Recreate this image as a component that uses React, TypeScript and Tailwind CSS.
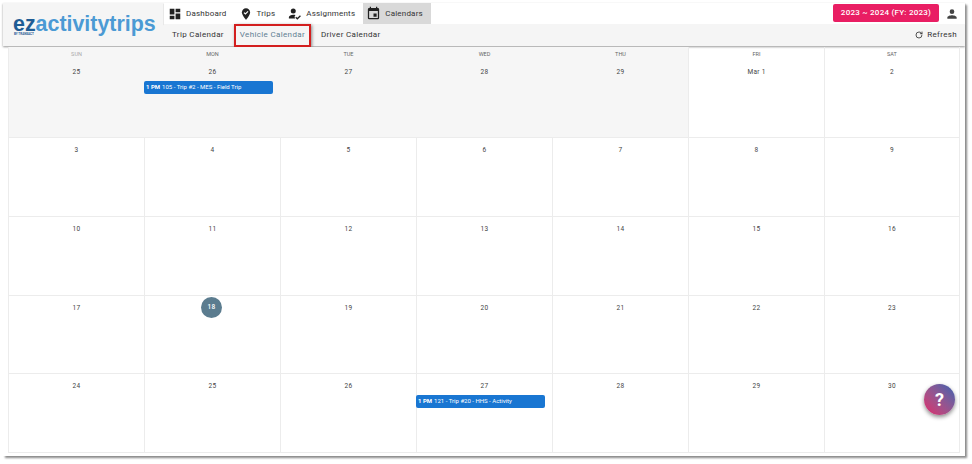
import { RotateCw } from "lucide-react";

const weekdays = ["SUN", "MON", "TUE", "WED", "THU", "FRI", "SAT"];

const weeks = [
  ["25", "26", "27", "28", "29", "Mar 1", "2"],
  ["3", "4", "5", "6", "7", "8", "9"],
  ["10", "11", "12", "13", "14", "15", "16"],
  ["17", "18", "19", "20", "21", "22", "23"],
  ["24", "25", "26", "27", "28", "29", "30"],
];

const rowHeights = ["h-[77px]", "h-[79px]", "h-[79px]", "h-[78px]", "h-[79px]"];

function DashboardIcon() {
  return (
    <svg viewBox="0 0 24 24" className="h-[14px] w-[14px] fill-[#222]">
      <path d="M3 13h8V3H3zm0 8h8v-6H3zm10 0h8V11h-8zm0-18v6h8V3z" />
    </svg>
  );
}

function PinIcon() {
  return (
    <svg viewBox="0 0 24 24" className="h-[14px] w-[14px]">
      <path fill="#222" d="M12 2C8 2 5 5 5 9c0 5 7 13 7 13s7-8 7-13c0-4-3-7-7-7z" />
      <path fill="none" stroke="#fff" strokeWidth="2" d="M8.500 9.500l2.500 2.500 4.500-4.500" />
    </svg>
  );
}

function AssignIcon() {
  return (
    <svg viewBox="0 0 24 24" className="h-[15px] w-[15px] fill-[#222]">
      <circle cx="10" cy="8" r="4" />
      <path d="M10 14c-3.500 0-7 1.700-7 4v2h10l-1-3 1.500-2.600c-1.300-.3-2.500-.4-3.500-.4z" />
      <path fill="none" stroke="#222" strokeWidth="2" d="M14 18l2.500 2.500 5-5" />
    </svg>
  );
}

function CalendarIcon() {
  return (
    <svg viewBox="0 0 24 24" className="h-[15px] w-[15px] fill-[#222]">
      <path d="M17 12h-5v5h5zM16 1v2H8V1H6v2H5a2 2 0 0 0-2 2v14a2 2 0 0 0 2 2h14a2 2 0 0 0 2-2V5a2 2 0 0 0-2-2h-1V1zm3 18H5V8h14z" />
    </svg>
  );
}

function PersonIcon() {
  return (
    <svg viewBox="0 0 24 24" className="h-[14px] w-[14px] fill-[#444]">
      <path d="M12 12a4 4 0 1 0 0-8 4 4 0 0 0 0 8zm0 2c-2.700 0-8 1.300-8 4v2h16v-2c0-2.700-5.300-4-8-4z" />
    </svg>
  );
}

function EventBar({ time, text }: { time: string; text: string }) {
  return (
    <div className="mt-[4px] -ml-[1px] mr-[7px] h-[13px] rounded-[2px] bg-[#1976d2] pt-[2px] pl-[2px] text-left text-[6px] leading-[7px] tracking-normal whitespace-nowrap text-white">
      <span className="mr-[2px] font-bold">{time}</span>
      {text}
    </div>
  );
}

function NavItem({ icon, label, active }: { icon: React.ReactNode; label: string; active?: boolean }) {
  return (
    <div
      className={`flex h-full items-center gap-[4px] text-[8px] tracking-[0.2px] whitespace-nowrap text-[#333] ${
        active ? "-ml-[4px] bg-[#d9d9d9] pr-[8px] pl-[3px]" : ""
      }`}
    >
      {icon}
      <span>{label}</span>
    </div>
  );
}

export default function App() {
  return (
    <div className="h-[464px] w-[972px] overflow-hidden bg-white pt-[3px] pl-[3px] font-['Roboto',sans-serif]">
      <div className="relative h-[453px] w-[962px] bg-white shadow-[2px_2px_2px_#8a8a8a]">
        <header className="flex h-[43px] shadow-[0_1px_2px_#999]">
          <div className="flex w-[161px] flex-col items-start justify-center bg-[#f5f5f5] pl-[10px]">
            <div className="font-['Liberation_Sans',sans-serif] text-[21.400px] leading-[22px] font-bold">
              <span className="text-[#1f5c94]">ez</span>
              <span className="text-[#4b9ad4]">activitytrips</span>
            </div>
            <div className="-mt-[2px] pl-[1px] text-[3px] leading-[3px] font-bold text-[#1f5c94]">BY TRANSACT</div>
          </div>
          <div className="flex flex-1 flex-col">
            <div className="flex h-[21px] bg-white shadow-[0_1px_1px_#aaa]">
              <div className="flex h-full flex-1 items-center gap-[12px] pl-[4px]">
                <NavItem icon={<DashboardIcon />} label="Dashboard" />
                <NavItem icon={<PinIcon />} label="Trips" />
                <NavItem icon={<AssignIcon />} label="Assignments" />
                <NavItem icon={<CalendarIcon />} label="Calendars" active />
              </div>
              <div className="mt-[1px] flex h-[18px] w-[106px] items-center justify-center rounded-[2px] bg-[#e91e63] text-[8px] font-medium tracking-[0.25px] whitespace-nowrap text-white">
                2023 ~ 2024 (FY: 2023)
              </div>
              <div className="flex w-[26px] items-center justify-center">
                <PersonIcon />
              </div>
            </div>
            <div className="flex h-[22px] items-center bg-[#f5f5f5] pr-[8px] pl-[8px] text-[8px] tracking-[0.35px] whitespace-nowrap text-[#333]">
              <span className="mr-[10px]">Trip Calendar</span>
              <div className="mr-[10px] flex h-[23px] w-[77px] items-center justify-center border-2 border-[#d31f1f] text-[#5f7f93] shadow-[1px_1px_3px_#888]">
                Vehicle Calendar
              </div>
              <span>Driver Calendar</span>
              <div className="ml-auto flex items-center gap-[4px]">
                <RotateCw className="h-[8px] w-[8px]" strokeWidth={2.5} />
                <span>Refresh</span>
              </div>
            </div>
          </div>
        </header>

        <div className="mx-[5px] mt-[1px] text-[#444]">
          <div className="grid h-[14px] grid-cols-7 text-center text-[5.500px] leading-[14px]">
            {weekdays.map((day, i) => (
              <div
                key={day}
                className={`border-l border-[#ececec] last:border-r ${i < 5 ? "bg-[#f6f6f6]" : ""} ${
                  i > 0 && i < 5 ? "border-transparent" : ""
                } ${i === 0 ? "text-[#aaa]" : "text-[#666]"}`}
              >
                {day}
              </div>
            ))}
          </div>
          {weeks.map((week, r) => (
            <div key={r} className={`grid grid-cols-7 border-b border-[#ececec] ${rowHeights[r]}`}>
              {week.map((date, c) => (
                <div
                  key={c}
                  className={`border-l text-center text-[6.500px] leading-[9px] tracking-[0.3px] last:border-r ${
                    r === 0 ? "pt-[7px]" : "pt-[8px]"
                  } ${r === 0 && c < 5 ? "bg-[#f6f6f6]" : ""} ${
                    r === 0 && c > 0 && c < 5 ? "border-transparent" : "border-[#ececec]"
                  }`}
                >
                  {r === 3 && c === 1 ? (
                    <div className="mx-auto -mt-[7px] flex h-[21px] w-[21px] -translate-x-[1px] items-center justify-center rounded-full bg-[#5b7c8f] font-medium text-white">
                      {date}
                    </div>
                  ) : (
                    <div>{date}</div>
                  )}
                  {r === 0 && c === 1 && <EventBar time="1 PM" text="105 - Trip #2 - MES - Field Trip" />}
                  {r === 4 && c === 3 && <EventBar time="1 PM" text="121 - Trip #20 - HHS - Activity" />}
                </div>
              ))}
            </div>
          ))}
        </div>

        <button className="absolute top-[381px] left-[921px] flex h-[31px] w-[31px] items-center justify-center rounded-full bg-gradient-to-tr from-[#e0186a] to-[#2f5fb0] text-[18px] leading-none font-bold text-white shadow-[0_2px_4px_#888]">
          ?
        </button>
      </div>
    </div>
  );
}
